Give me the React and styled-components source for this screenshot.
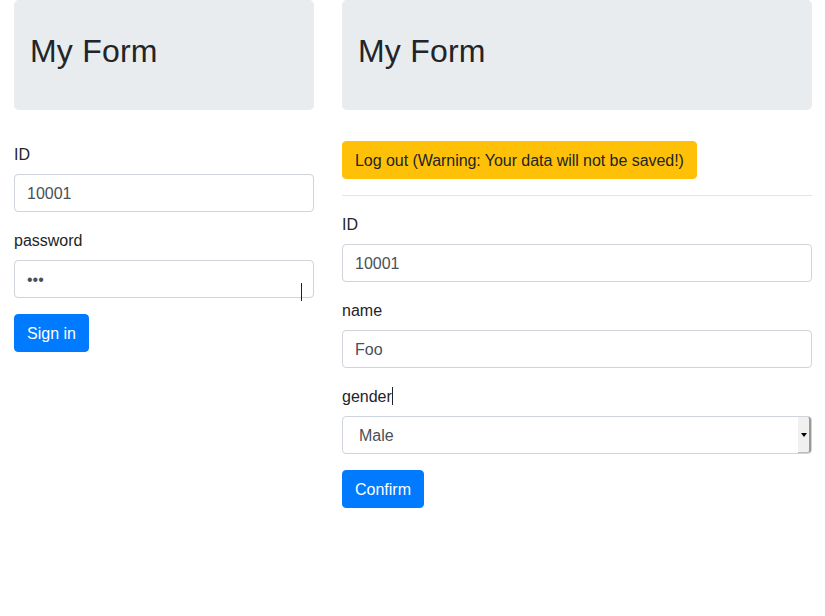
import React from "react";
import styled, { createGlobalStyle } from "styled-components";

const Global = createGlobalStyle`
  html, body { margin: 0; padding: 0; background: #fff; }
  body {
    font-family: "Liberation Sans", Arial, sans-serif;
    font-size: 16px;
    line-height: 1.5;
    color: #212529;
  }
  * { box-sizing: border-box; }
`;

const Page = styled.div`
  display: flex;
  align-items: flex-start;
  gap: 28px;
  padding: 0 13px 0 14px;
`;

const Column = styled.div`
  width: ${(p) => p.$width}px;
  flex: none;
`;

const Jumbotron = styled.div`
  background: #e9ecef;
  border-radius: 4.8px;
  padding: 32px 16px;
  margin-bottom: ${(p) => p.$gap ?? 32}px;
`;

const Title = styled.h2`
  margin: 0 0 8px;
  font-size: 32px;
  line-height: 1.2;
  font-weight: 400;
  letter-spacing: 0.2px;
`;

const Group = styled.div`
  margin-bottom: 16px;
  position: relative;
`;

const Label = styled.label`
  display: inline-block;
  margin-bottom: 8px;
  padding-top: 1px;
  height: 24px;
`;

const Input = styled.input`
  display: block;
  width: 100%;
  height: 38px;
  padding: 7px 12px 5px;
  font-family: inherit;
  font-size: 16px;
  line-height: 1.5;
  color: #495057;
  background: #fff;
  border: 1px solid #ced4da;
  border-radius: 4px;
  outline: none;
`;

const Button = styled.button`
  display: inline-block;
  font-family: inherit;
  font-size: 16px;
  line-height: 1.5;
  padding: 7px 12px 5px;
  border: 1px solid ${(p) => (p.$variant === "warning" ? "#ffc107" : "#007bff")};
  background: ${(p) => (p.$variant === "warning" ? "#ffc107" : "#007bff")};
  color: ${(p) => (p.$variant === "warning" ? "#212529" : "#fff")};
  border-radius: 4px;
  cursor: pointer;
  letter-spacing: ${(p) => (p.$variant === "warning" ? "-0.05px" : "0")};
`;

const Divider = styled.hr`
  margin: 16px 0 16px;
  border: 0;
  border-top: 1px solid rgba(0, 0, 0, 0.1);
`;

const Caret = styled.span`
  display: inline-block;
  width: 1px;
  height: 18px;
  background: #222;
  vertical-align: -3px;
`;

const PointerBeam = styled.span`
  position: absolute;
  left: 287px;
  top: 55px;
  width: 1px;
  height: 18px;
  background: #222;
`;

const Select = styled.div`
  position: relative;
  display: flex;
  align-items: center;
  height: 38px;
  padding: 2px 16px 0;
  color: #495057;
  border: 1px solid #ced4da;
  border-radius: 4px;
  background: #fff;
`;

const SelectArrow = styled.span`
  position: absolute;
  right: 0;
  top: 0;
  bottom: 0;
  width: 13px;
  background: #f0f0f0;
  border-right: 2px solid #999;
  border-bottom: 1px solid #bbb;
  border-top-right-radius: 3px;
  border-bottom-right-radius: 3px;
  display: flex;
  align-items: center;
  justify-content: center;
  &::after {
    content: "";
    border-left: 3px solid transparent;
    border-right: 3px solid transparent;
    border-top: 4px solid #000;
  }
`;

export default function App() {
  return (
    <>
      <Global />
      <Page>
        <Column $width={300}>
          <Jumbotron>
            <Title>My Form</Title>
          </Jumbotron>
          <Group>
            <Label>ID</Label>
            <Input type="text" defaultValue="10001" />
          </Group>
          <Group>
            <Label>password</Label>
            <Input type="password" defaultValue="abc" />
            <PointerBeam />
          </Group>
          <Button $variant="primary">Sign in</Button>
        </Column>
        <Column $width={470}>
          <Jumbotron $gap={31}>
            <Title>My Form</Title>
          </Jumbotron>
          <Button $variant="warning">Log out (Warning: Your data will not be saved!)</Button>
          <Divider />
          <Group>
            <Label>ID</Label>
            <Input type="text" defaultValue="10001" />
          </Group>
          <Group>
            <Label>name</Label>
            <Input type="text" defaultValue="Foo" />
          </Group>
          <Group>
            <Label>
              gender<Caret />
            </Label>
            <Select>
              Male
              <SelectArrow />
            </Select>
          </Group>
          <Button $variant="primary">Confirm</Button>
        </Column>
      </Page>
    </>
  );
}
